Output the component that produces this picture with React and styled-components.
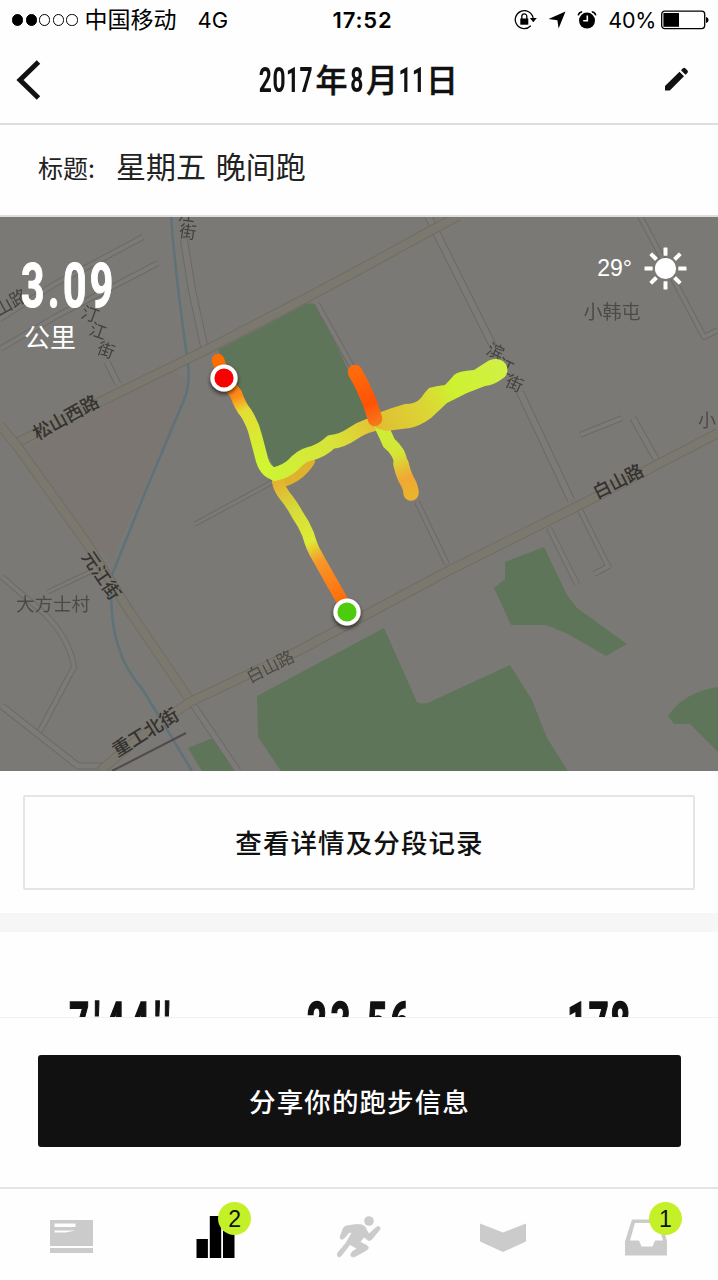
import React from "react";
import styled, { createGlobalStyle } from "styled-components";

const GlobalStyle = createGlobalStyle`
  * { box-sizing: border-box; }
  body {
    margin: 0;
    background: #fefefe;
    color: #111;
    font-family: "Liberation Sans", "Noto Sans CJK SC", sans-serif;
  }
`;

const Screen = styled.main`
  width: 718px;
  height: 1280px;
  display: flex;
  flex-direction: column;
  overflow: hidden;
  background: #fefefe;
`;

const StatusBar = styled.div`
  height: 40px;
  flex: none;
  display: grid;
  grid-template-columns: 1fr auto 1fr;
  align-items: center;
  padding: 0 9px 0 12px;
  font-family: Inter, "Noto Sans CJK SC", sans-serif;
  font-size: 22px;
  line-height: 40px;
  color: #000;
`;

const StatusGroup = styled.div`
  display: flex;
  align-items: center;
  justify-content: ${(p) => (p.$end ? "flex-end" : "flex-start")};
`;

const StatusIcons = styled.div`
  display: flex;
  align-items: center;
  gap: 11px;
`;

const Signal = styled.div`
  display: flex;
  gap: 2.4px;
  margin-right: 7px;
`;

const SignalDot = styled.i`
  width: 11.2px;
  height: 11.2px;
  border-radius: 50%;
  border: 1px solid #000;
  background: ${(p) => (p.$on ? "#000" : "transparent")};
`;

const Carrier = styled.span`
  font-size: 23px;
  margin-right: 21px;
`;

const Network = styled.span`
  font-size: 22px;
`;

const Clock = styled.span`
  font-size: 22px;
  font-weight: 600;
  letter-spacing: 0.8px;
  position: relative;
  left: 2px;
`;

const Percent = styled.span`
  font-size: 21.5px;
  letter-spacing: -0.3px;
  margin: 0 5px 0 11px;
`;

const Header = styled.header`
  height: 85px;
  flex: none;
  display: flex;
  align-items: center;
  justify-content: space-between;
  padding: 0 29px 4px 16px;
  border-bottom: 2px solid #dedede;
`;

const DateTitle = styled.h1`
  margin: 0 0 0 12px;
  display: flex;
  align-items: center;
  height: 40px;
  color: #111;
`;

const DateDigits = styled.span`
  width: ${(p) => p.$width}px;
  display: flex;
  justify-content: center;
  font: 700 34.5px/40px Roboto, sans-serif;
  letter-spacing: 0.8px;
  transform: scaleX(0.66);
`;

const DateUnit = styled.span`
  width: ${(p) => p.$width}px;
  display: flex;
  justify-content: center;
  font: 500 32px/36px "Noto Sans CJK SC", sans-serif;
  padding-bottom: 4px;
  -webkit-text-stroke: 0.5px #111;
`;

const TitleRow = styled.section`
  height: 92px;
  flex: none;
  display: flex;
  align-items: baseline;
  gap: 14px;
  padding: 18px 38px 0;
  border-bottom: 2px solid #dedede;
  font-family: "Noto Sans CJK SC", sans-serif;
  color: #222;
`;

const TitleLabel = styled.span`
  font-size: 25px;
  width: 64px;
  white-space: nowrap;
`;

const TitleValue = styled.span`
  font-size: 30px;
  line-height: 44px;
  word-spacing: 3px;
`;

const MapPanel = styled.section`
  position: relative;
  height: 554px;
  flex: none;
  overflow: hidden;
  background: #7b7975;
`;

const MapDrawing = styled.svg`
  display: block;
  font-family: "Noto Sans CJK SC", sans-serif;
`;

const Distance = styled.div`
  position: absolute;
  left: 21px;
  top: 37px;
  color: #fff;
`;

const DistanceValue = styled.div`
  font: 700 62px/64px Roboto, sans-serif;
  letter-spacing: 5px;
  transform: scaleX(0.66);
  transform-origin: left;
  width: 100px;
  -webkit-text-stroke: 1.2px #fff;
`;

const DistanceUnit = styled.div`
  font: 400 26px/34px "Noto Sans CJK SC", sans-serif;
  padding: 1px 0 0 3px;
`;

const Weather = styled.div`
  position: absolute;
  right: 31px;
  top: 30px;
  display: flex;
  align-items: center;
  gap: 12px;
  color: #fff;
  font-size: 23px;
`;

const DetailSection = styled.section`
  height: 142px;
  flex: none;
  padding: 24px 23px 0;
`;

const DetailButton = styled.button`
  display: block;
  width: 100%;
  height: 95px;
  border: 2px solid #e6e4e4;
  border-radius: 2px;
  background: #fefefe;
  color: #111;
  font: 500 26.5px/88px "Noto Sans CJK SC", sans-serif;
  letter-spacing: 1.1px;
  padding: 0 0 2px 1px;
`;

const Divider = styled.div`
  height: 19px;
  flex: none;
  background: #f6f6f6;
`;

const Stats = styled.section`
  height: 85px;
  flex: none;
  display: grid;
  grid-template-columns: repeat(3, 239.3px);
  overflow: hidden;
  padding-top: 58px;
`;

const Stat = styled.div`
  display: flex;
  justify-content: center;
  font: 700 55px/66px Roboto, sans-serif;
  letter-spacing: ${(p) => p.$spacing}px;
  padding-left: ${(p) => p.$spacing}px;
  transform: scaleX(0.63);
  white-space: nowrap;
  -webkit-text-stroke: 1.6px #111;
`;

const Colon = styled.span`
  position: relative;
  top: 10px;
`;

const ShareArea = styled.section`
  height: 170px;
  flex: none;
  padding: 37px 38px 0;
  border-top: 1px solid #f1f1f1;
`;

const ShareButton = styled.button`
  display: block;
  width: 643px;
  height: 92px;
  border: 0;
  border-radius: 3px;
  background: #111;
  color: #fff;
  font: 500 26.5px/90px "Noto Sans CJK SC", sans-serif;
  letter-spacing: 1.1px;
  padding: 0;
`;

const TabBar = styled.nav`
  flex: 1;
  display: grid;
  grid-template-columns: repeat(5, 1fr);
  border-top: 2px solid #e4e4e4;
`;

const Tab = styled.a`
  position: relative;
  display: flex;
  justify-content: center;
  padding-top: 20px;
  color: ${(p) => (p.$active ? "#000" : "#cbcbcb")};
`;

const Badge = styled.span`
  position: absolute;
  left: 74.500px;
  top: 13px;
  width: 33px;
  height: 33px;
  border-radius: 50%;
  background: #c4f027;
  color: #111;
  text-align: center;
  font: 23px/34px "Liberation Sans", sans-serif;
`;

function LockIcon() {
  return (
    <svg width="23" height="22" viewBox="0 0 23 22">
      <path d="M16.8 16.8A9 9 0 1 1 19.1 9" fill="none" stroke="#000" strokeWidth="1.3" />
      <path d="M15.800 9h7l-3.500 4.200z" />
      <path d="M6.300 9.500h8v6.200h-8z" />
      <path d="M7.800 10V7.400a2.500 2.500 0 0 1 5 0V10" fill="none" stroke="#000" strokeWidth="1.3" />
    </svg>
  );
}

function LocationIcon() {
  return (
    <svg width="18" height="18" viewBox="0 0 18 18">
      <path d="M17.500.500 10.600 17.500 9.400 9.200.500 8.100z" />
    </svg>
  );
}

function AlarmIcon() {
  return (
    <svg width="20" height="20" viewBox="0 0 20 20">
      <circle cx="10" cy="10.6" r="8" />
      <path d="M1.200 5.400Q2 2 5.200 1.700M18.800 5.400Q18 2 14.800 1.700" fill="none" stroke="#000" strokeWidth="1.5" />
      <path d="M10.300 5.600v5.200H6.200" fill="none" stroke="#fff" strokeWidth="1.6" />
    </svg>
  );
}

function BatteryIcon() {
  return (
    <svg width="48" height="20" viewBox="0 0 48 20">
      <rect x=".7" y="1.2" width="43" height="17.4" rx="3" fill="none" stroke="#000" strokeWidth="1.3" />
      <rect x="2.4" y="3" width="15.6" height="13.8" />
      <path d="M45 7q2.600.400 2.600 3T45 13z" />
    </svg>
  );
}

function SunIcon() {
  const rays = [0, 45, 90, 135, 180, 225, 270, 315];
  return (
    <svg width="43" height="43" viewBox="-21.5 -21.5 43 43">
      <circle r="10.6" fill="#fff" />
      {rays.map((a) => (
        <rect key={a} x="-2" y="-21" width="4" height="8.2" rx=".6" fill="#fff" transform={`rotate(${a})`} />
      ))}
    </svg>
  );
}

const ROADS = [
  ["M0 319 55 284 143 237", 5],
  ["M0 349 55 317 158 263", 5],
  ["M184 240 192 290 206 355", 7],
  ["M317 304 355 372M417 502 447 564", 5],
  ["M428 216 465 290 495 350M520 392 571 500", 7],
  ["M640 216 704 337 718 330", 5],
  ["M580 435 622 418", 5],
  ["M633 418 656 459", 6],
  ["M549 528 577 584M609 568 578 506M594 574 609 566", 5],
  ["M107 362 118 384", 6],
  ["M2 577 45 614Q70 640 74 667L40 731", 5],
  ["M48 592 90 572", 4],
  ["M2 706 78 766H102", 6],
  ["M190 700 238 771", 6],
  ["M195 524 278 479", 4],
];

const MAIN_ROADS = [
  "M14 444 110 397 210 348 310 296 370 264 430 231 458 216",
  "M0 425 20 450 88 545 130 612 190 700",
  "M100 771 140 737 190 702 300 650 450 570 580 505 718 433",
];

const LABELS = [
  ["松山西路", 69, 423, -29, 18, 1, 500],
  ["山路", 14, 308, -29, 18, 0.75, 400],
  ["元江街", 96, 579, 56, 18, 1, 500],
  ["白山路", 621, 487, -27, 18, 1, 500],
  ["白山路", 273, 672, -27, 17, 0.65, 400],
  ["重工北街", 149, 738, -32, 18.5, 1, 500],
  ["大方士村", 53, 611, 0, 18.5, 0.65, 400],
  ["小韩屯", 612, 319, 0, 19, 0.65, 400],
  ["小", 707, 427, 0, 18, 0.65, 400],
];

const STREET_CHARS = [
  ["汀", 88, 320, 20], ["江", 96, 337, 20], ["街", 104, 356, 20],
  ["滨", 493, 357, 25], ["江", 503, 372, 25], ["街", 512, 389, 25],
  ["江", 186, 221, 8], ["街", 187, 238, 8],
];

function RouteMap() {
  return (
    <MapDrawing width="718" height="554" viewBox="0 217 718 554">
      <defs>
        <linearGradient id="finish" gradientUnits="userSpaceOnUse" x1="218" y1="360" x2="260" y2="460">
          <stop offset="0" stopColor="#ff6c00" />
          <stop offset=".38" stopColor="#ff8b18" />
          <stop offset=".52" stopColor="#e3dc35" />
          <stop offset="1" stopColor="#d1f530" />
        </linearGradient>
        <linearGradient id="start" gradientUnits="userSpaceOnUse" x1="277" y1="480" x2="344" y2="602">
          <stop offset="0" stopColor="#e6b02f" />
          <stop offset=".25" stopColor="#d4dc39" />
          <stop offset=".5" stopColor="#ddec35" />
          <stop offset=".66" stopColor="#f7972a" />
          <stop offset="1" stopColor="#ff6b08" />
        </linearGradient>
        <linearGradient id="middle" gradientUnits="userSpaceOnUse" x1="270" y1="475" x2="388" y2="422">
          <stop offset="0" stopColor="#cdf336" />
          <stop offset=".55" stopColor="#d7e339" />
          <stop offset="1" stopColor="#e8b932" />
        </linearGradient>
        <linearGradient id="east" gradientUnits="userSpaceOnUse" x1="378" y1="424" x2="500" y2="370">
          <stop offset="0" stopColor="#dfbf32" />
          <stop offset=".4" stopColor="#dbd734" />
          <stop offset=".62" stopColor="#cef22f" />
          <stop offset="1" stopColor="#d0f044" />
        </linearGradient>
        <linearGradient id="south" gradientUnits="userSpaceOnUse" x1="383" y1="428" x2="411" y2="496">
          <stop offset="0" stopColor="#cfee35" />
          <stop offset=".4" stopColor="#d3e537" />
          <stop offset=".75" stopColor="#f1a734" />
          <stop offset="1" stopColor="#e9b42b" />
        </linearGradient>
        <linearGradient id="north" gradientUnits="userSpaceOnUse" x1="355" y1="372" x2="378" y2="425">
          <stop offset="0" stopColor="#ff6b0b" />
          <stop offset=".6" stopColor="#ff5205" />
          <stop offset="1" stopColor="#f67b1c" />
        </linearGradient>
        <filter id="pinShadow" x="-50%" y="-50%" width="200%" height="200%">
          <feDropShadow dx="0" dy="2.5" stdDeviation="2" floodColor="#000" floodOpacity=".65" />
        </filter>
      </defs>

      <path d="M18 452 110 403 172 372 186 378 184 400 112 560 88 545z" fill="#7d746c" opacity=".4" />

      <g fill="#5f7559">
        <path d="M218 350 306 304Q315 301 319 309L372 420 277 474 240 396z" />
        <path d="M257 696 384 628 417 702Q424 706 434 700L510 665 532 700 547 738 568 771H281L258 737z" />
        <path d="M505 562 544 547 567 595 577 608 627 644 606 656 568 634 546 625H511L494 588 505 579z" />
        <path d="M718 687Q684 692 668 716L674 724H690L718 752z" />
        <path d="M188 748 215 737 233 771H202z" />
      </g>

      <g fill="none" strokeLinejoin="round">
        <path d="M171 217Q175 270 186 350Q192 382 184 400L146 490 112 575Q109 618 118 645Q124 668 143 690L192 771" stroke="#5e727a" strokeWidth="2.5" />
        {ROADS.map(([d, w]) => (
          <g key={d}>
            <path d={d} stroke="#6c6967" strokeWidth={w + 1} />
            <path d={d} stroke="#7d7b77" strokeWidth={w - 1} />
          </g>
        ))}
        {MAIN_ROADS.map((d) => (
          <g key={d}>
            <path d={d} stroke="#726d64" strokeWidth="10" />
            <path d={d} stroke="#7b786f" strokeWidth="8" />
          </g>
        ))}
        <path d="M112 771 186 733" stroke="#514b4a" strokeWidth="2" />
      </g>

      <g fill="#333230" textAnchor="middle">
        {LABELS.map(([text, x, y, angle, size, opacity, weight], i) => (
          <text key={i} transform={`translate(${x} ${y}) rotate(${angle})`} fontSize={size} opacity={opacity} fontWeight={weight}>
            {text}
          </text>
        ))}
        {STREET_CHARS.map(([text, x, y, angle], i) => (
          <text key={i} transform={`translate(${x} ${y}) rotate(${angle})`} fontSize="17" opacity=".8">
            {text}
          </text>
        ))}
      </g>

      <g fill="none" strokeLinecap="round" strokeLinejoin="round">
        <path d="M279 482Q298 478 309 461" stroke="#dfb12d" strokeWidth="12" />
        <path d="M278 482Q280 490 285 496Q293 506 297 514Q304 524 308 534Q312 548 317 556L344 604" stroke="url(#start)" strokeWidth="12" />
        <path d="M218 360 224 378 236 394Q240 406 246 413Q253 424 256 437Q259 448 262 460Q266 473 276 474" stroke="url(#finish)" strokeWidth="12.5" />
        <path d="M275 474Q285 472 293 465Q301 456 309 454Q322 451 331 442Q342 441 352 434Q366 424 386 422" stroke="url(#middle)" strokeWidth="14" />
        <path d="M382 428Q386 436 389 443Q400 452 401 464" stroke="url(#south)" strokeWidth="13.5" />
        <path d="M401 464Q403 473 406 479Q411 487 411 493" stroke="url(#south)" strokeWidth="15.5" />
        <path d="M378 413 392 408 405 404Q416 404 421 398Q425 392 429 388Q436 386 445 385Q450 380 454 375Q458 371 474 370L488 361C505 353 514 372 502 379Q494 385 485 386L467 393 447 403 431 418Q420 426 410 428L386 431 376 428z" fill="url(#east)" />
        <path d="M355 372 362 385 370 403 375 419" stroke="url(#north)" strokeWidth="14.5" />
      </g>

      <g stroke="#fff" strokeWidth="4" filter="url(#pinShadow)">
        <circle cx="224" cy="378" r="11.6" fill="#fb0000" />
        <circle cx="347" cy="612" r="11.6" fill="#4dcc0b" />
      </g>
    </MapDrawing>
  );
}

function CardIcon() {
  return (
    <svg width="43" height="44" viewBox="0 0 43 44" fill="currentColor">
      <path d="M0 11h43v26H0zM0 39h43V45H0z" />
      <path d="M4.500 14.500h21v3.500h-21zM4.500 21.500h21l-10 2h-11z" fill="#fefefe" />
    </svg>
  );
}

function BarsIcon() {
  return (
    <svg width="40" height="50" viewBox="0 0 40 50" fill="currentColor">
      <path d="M1.500 30h11.400V49H1.500zM14.800 7h11.400V49H14.800zM28 17H39.500v32H28z" />
    </svg>
  );
}

function RunnerIcon() {
  return (
    <svg width="44" height="50" viewBox="0 0 44 50" fill="currentColor">
      <circle cx="32" cy="12" r="4.8" />
      <path
        d="M9 17 19 15.500Q29 15 29.500 21L32 25 39 18.500Q42 16.500 43 18.500Q43.500 20 42 21.500L35 30Q32 33 29 29.500L27 28 23 33 30 36.500Q33 39 29 41.500L17 48Q13 48 14 45L15 43 20 39.500 13 35.500 4 47Q2 49 .500 47Q-.500 45.500 1 43.500L9 34 15 23.500H12L7 29.500Q3 31.500 3 28L6 20Q7 17.500 9 17z"
        stroke="currentColor"
        strokeWidth=".8"
      />
    </svg>
  );
}

function ClubIcon() {
  return (
    <svg width="46" height="46" viewBox="0 0 46 46" fill="currentColor">
      <path d="M0 14.500 23 23.500 46 14.500v18L23 43 0 32.500z" />
    </svg>
  );
}

function InboxIcon() {
  return (
    <svg width="44" height="47" viewBox="0 0 44 47" fill="currentColor">
      <path fillRule="evenodd" d="M8 10.500h29l6 22v14H1v-14zM11 14 6 31.500h9l2.500 6h11l2.500-6h8L34 14z" />
    </svg>
  );
}

const TABS = [
  { icon: CardIcon },
  { icon: BarsIcon, active: true, badge: "2" },
  { icon: RunnerIcon },
  { icon: ClubIcon },
  { icon: InboxIcon, badge: "1" },
];

export default function App() {
  return (
    <Screen>
      <GlobalStyle />
      <StatusBar>
        <StatusGroup>
          <Signal>
            {[1, 1, 0, 0, 0].map((on, i) => (
              <SignalDot key={i} $on={on} />
            ))}
          </Signal>
          <Carrier>中国移动</Carrier>
          <Network>4G</Network>
        </StatusGroup>
        <Clock>17:52</Clock>
        <StatusGroup $end>
          <StatusIcons>
            <LockIcon />
            <LocationIcon />
            <AlarmIcon />
          </StatusIcons>
          <Percent>40%</Percent>
          <BatteryIcon />
        </StatusGroup>
      </StatusBar>

      <Header>
        <svg width="25" height="41" viewBox="0 0 25 41">
          <path d="M22.500 3 4 21 22.500 39" fill="none" stroke="#111" strokeWidth="5" />
        </svg>
        <DateTitle>
          <DateDigits $width={56}>2017</DateDigits>
          <DateUnit $width={35}>年</DateUnit>
          <DateDigits $width={16}>8</DateDigits>
          <DateUnit $width={34}>月</DateUnit>
          <DateDigits $width={26}>11</DateDigits>
          <DateUnit $width={34}>日</DateUnit>
        </DateTitle>
        <svg width="25" height="25" viewBox="0 0 25 25" fill="#111">
          <path d="M1 19 15.500 4.700 20 9.200 5.800 23.500H1zM17 3.300 19 1.300Q20.300.300 21.500 1.500L23.500 3.500Q24.500 4.700 23.400 5.900L21.500 7.800z" />
        </svg>
      </Header>

      <TitleRow>
        <TitleLabel>标题:</TitleLabel>
        <TitleValue>星期五 晚间跑</TitleValue>
      </TitleRow>

      <MapPanel>
        <RouteMap />
        <Distance>
          <DistanceValue>3.09</DistanceValue>
          <DistanceUnit>公里</DistanceUnit>
        </Distance>
        <Weather>
          29°
          <SunIcon />
        </Weather>
      </MapPanel>

      <DetailSection>
        <DetailButton>查看详情及分段记录</DetailButton>
      </DetailSection>
      <Divider />
      <Stats>
        <Stat $spacing={8}>7'44''</Stat>
        <Stat $spacing={5.5}>23<Colon>:</Colon>56</Stat>
        <Stat $spacing={2.5}>178</Stat>
      </Stats>

      <ShareArea>
        <ShareButton>分享你的跑步信息</ShareButton>
      </ShareArea>

      <TabBar>
        {TABS.map(({ icon: Icon, active, badge }, i) => (
          <Tab key={i} $active={active}>
            <Icon />
            {badge && <Badge>{badge}</Badge>}
          </Tab>
        ))}
      </TabBar>
    </Screen>
  );
}
